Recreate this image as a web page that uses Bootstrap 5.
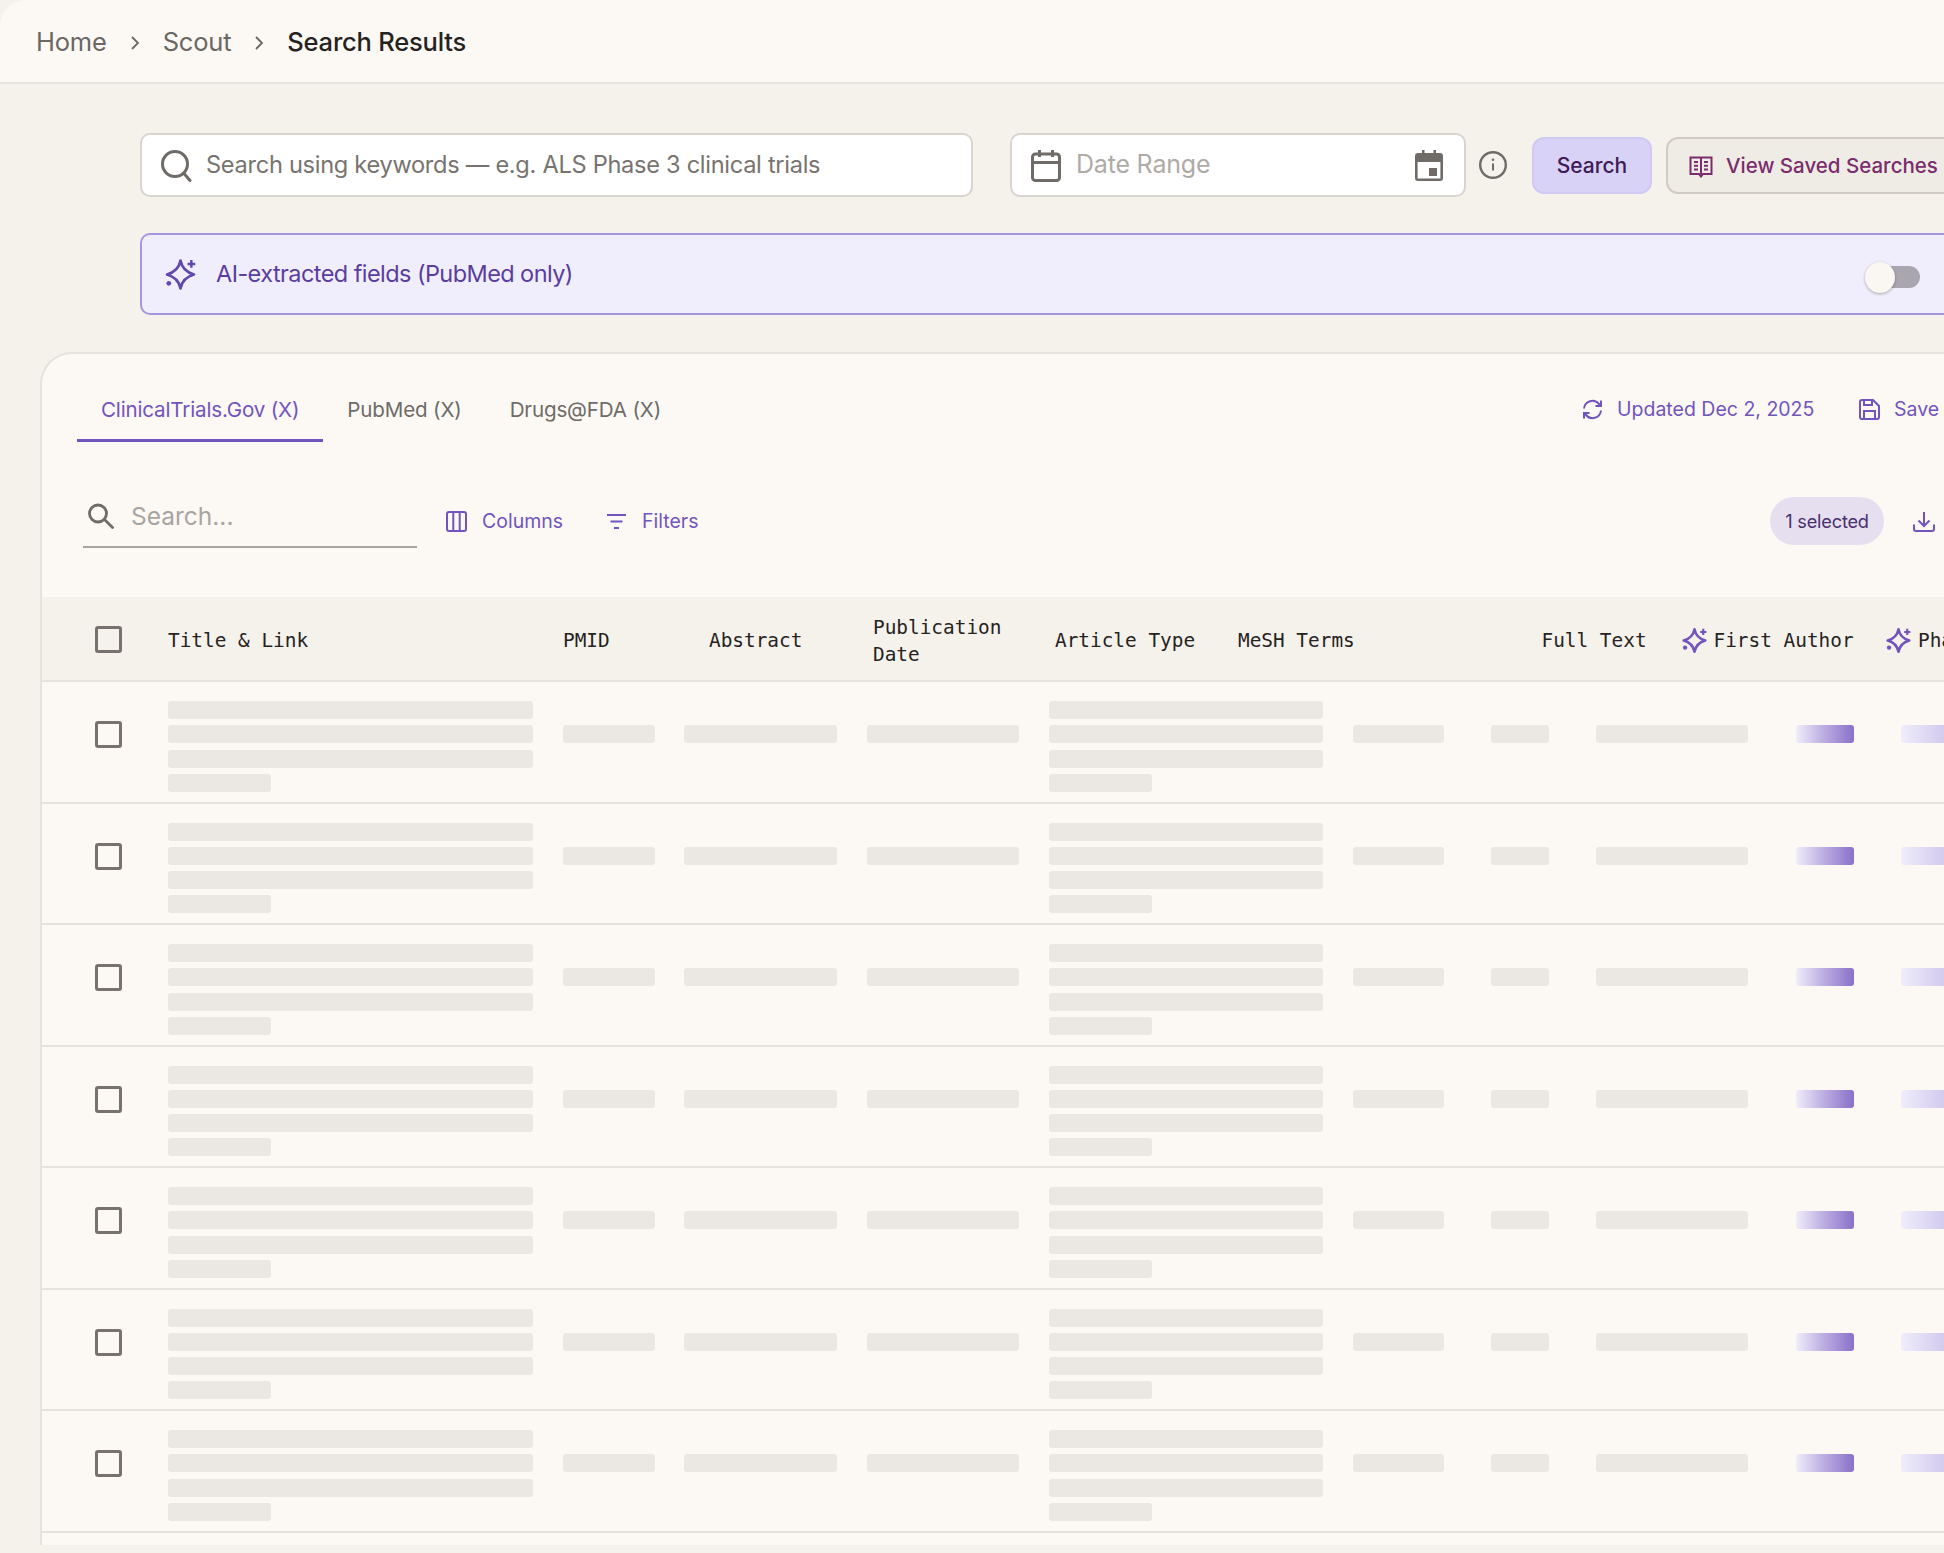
<!doctype html>
<html lang="en">
<head>
<meta charset="utf-8">
<title>Search Results</title>
<link rel="stylesheet" href="https://cdn.jsdelivr.net/npm/bootstrap@5.3.0/dist/css/bootstrap.min.css">
<style>
:root{--pur:#7254bd;--line:#e6e2dc;--paper:#fcf9f5;--sand:#f5f2eb;--bar:#ebe8e3;--ink:#6f6b67}
html,body{height:100%}
body{background:var(--sand);font-family:Inter,"Liberation Sans",sans-serif;overflow:hidden;width:1944px;height:1553px}
svg{display:block;flex:none}
.crumbbar{height:84px;background:var(--paper);border-bottom:2px solid var(--line);border-top-left-radius:26px;padding:3px 0 0 36px;font-size:25.5px;color:#6b6763;letter-spacing:-.2px}
.crumbbar b{font-weight:500;color:#26231f}
.crumbsep{margin:0 23px}
.toolzone{padding:49px 0 0 140px;width:2100px}
.fieldbox{height:64px;background:#fff;border:2px solid #d8d5d0;border-radius:10px;font-size:23.6px;color:#77736f;letter-spacing:-.29px}
.fieldsearch{width:833px;padding-left:18px;gap:14px}
.fielddate{width:456px;margin-left:37px;padding:0 21px 0 19px;gap:15px;color:#aeaba7;font-size:25px;letter-spacing:-.2px}
.infoglyph{margin-left:13px}
.btnsearch{margin-left:25px;width:120px;height:57px;background:#d8d3f6;border:2px solid #d0caf3;border-radius:12px;color:#3f1a56;font-size:21px;font-weight:500;padding:2px 0 0}
.btnsaved{margin-left:14px;width:300px;height:57px;background:#efece5;border:2px solid #d0ccc4;border-radius:12px;color:#7a2c6c;font-size:20.5px;font-weight:500;padding:2px 0 0 21px;gap:13px;justify-content:flex-start}
.aibar{margin-top:36px;height:82px;width:1900px;background:#f0eefc;border:2px solid #a497df;border-radius:10px;padding-left:23px;gap:20px;color:#5a3d9f;font-size:23.5px;letter-spacing:-.57px}
.switchwrap{position:absolute;left:1723px;top:27px;width:55px;height:31px}
.switchtrack{position:absolute;left:15px;top:4px;width:40px;height:22px;border-radius:0 11px 11px 0;background:#a9a6b0}
.switchknob{position:absolute;left:0;top:0;width:30px;height:31px;border-radius:50%;background:#faf7f2;box-shadow:0 1px 3px rgba(0,0,0,.3)}
.panel{margin:37px 0 0 40px;width:2100px;height:1193px;background:var(--paper);border:solid var(--line);border-width:2px 0 0 2px;border-top-left-radius:32px;overflow:hidden}
.tabsrow{height:88px;padding-left:35px;position:relative}
.tabitem{padding:24px 24px 0;height:88px;color:#6f6b67;font-size:20.6px;letter-spacing:-.17px;display:flex;align-items:center}
.tabitem.picked{color:var(--pur);border-bottom:3px solid var(--pur);padding-top:27px}
.rightlink{color:var(--pur);font-size:19.5px;font-weight:400}
.updated{position:absolute;left:1540px;top:45px;gap:14px;line-height:1}
.saved{position:absolute;left:1817px;top:45px;gap:14px;line-height:1}
.filterrow{height:155px;position:relative;color:var(--pur);font-size:19.5px}
.filterbox{position:absolute;left:41px;top:56px;width:334px;height:50px;border-bottom:2px solid #a9a6a2;padding:0 0 12px 4px;gap:16px;color:#a8a5a1;font-size:24.5px;font-weight:400}
.filterlink{position:absolute;top:69px;gap:15px;line-height:1}
.pillsel{position:absolute;left:1728px;top:55px;width:114px;height:48px;border-radius:24px;background:#e6dfef;color:#48306f;font-size:18.2px;letter-spacing:-.2px;padding-top:2px}
.dlglyph{position:absolute;left:1871px;top:69px}
.headrow{height:85px;background:var(--sand);border-bottom:2px solid var(--line);position:relative;font-family:"DejaVu Sans Mono","Liberation Mono",monospace;font-size:19.4px;line-height:27px;color:#26231f}
.headcell{position:absolute;top:3px;height:81px;display:flex;align-items:center;gap:7px;white-space:nowrap}
.headcell .checkmark{margin-top:-2px}
.datarow{height:121.5px;border-bottom:2px solid var(--line);display:flex;align-items:flex-start;padding-top:19px}
.checkmark{width:27px;height:27px;border:3px solid #77726f;border-radius:3px;flex:none}
.checkcell{width:126px;padding-left:53px;flex:none;margin-top:20px}
.skelcol{flex:none;display:flex;flex-direction:column;gap:6.3px}
.skelsingle{margin-top:24.3px}
.skel{height:18px;border-radius:3px;background:var(--bar)}
.skelshort{width:103px}
.skelglow{background:linear-gradient(90deg,#f0edfb 0%,#b9abe0 50%,#8a70c9 100%)}
.skelfade{background:linear-gradient(90deg,#f0edfb 0%,#d2cbee 48%,#b5a7e0 100%)}
</style>
</head>
<body>
<nav class="crumbbar d-flex align-items-center">
  <span>Home</span>
  <svg class="crumbsep" width="10" height="16" viewBox="0 0 10 16" fill="none" stroke="#6b6763" stroke-width="1.8"><path d="M2 2l6 6-6 6"/></svg>
  <span>Scout</span>
  <svg class="crumbsep" width="10" height="16" viewBox="0 0 10 16" fill="none" stroke="#6b6763" stroke-width="1.8"><path d="M2 2l6 6-6 6"/></svg>
  <b>Search Results</b>
</nav>

<div class="toolzone">
  <div class="d-flex align-items-center">
    <div class="fieldbox fieldsearch d-flex align-items-center">
      <svg width="32" height="33" viewBox="0 0 32 33" fill="none" stroke="#6f6b67" stroke-width="3" stroke-linecap="round"><circle cx="15" cy="15" r="12.5"/><path d="M24 24.5l6 7"/></svg>
      <span>Search using keywords — e.g. ALS Phase 3 clinical trials</span>
    </div>
    <div class="fieldbox fielddate d-flex align-items-center">
      <svg width="30" height="33" viewBox="0 0 30 33" fill="none" stroke="#6f6b67" stroke-width="3"><rect x="1.5" y="5" width="27" height="26.500" rx="3"/><path d="M1.500 13.500h27M8.500 1v7M21.500 1v7"/></svg>
      <span class="flex-grow-1">Date Range</span>
      <svg width="28" height="31" viewBox="0 0 28 31" fill="#6f6b67"><path d="M7 0h2.500v3h9V0H21v3h4a3 3 0 0 1 3 3v22a3 3 0 0 1-3 3H3a3 3 0 0 1-3-3V6a3 3 0 0 1 3-3h4zM2.600 12v16.400h22.800V12z"/><rect x="14" y="18" width="8" height="8"/></svg>
    </div>
    <svg class="infoglyph" width="28" height="28" viewBox="0 0 28 28" fill="none" stroke="#6f6b67" stroke-width="2.400"><circle cx="14" cy="14" r="12.800"/><path d="M14 12.500v7" stroke-width="2"/><circle cx="14" cy="8.800" r="1.300" fill="#6f6b67" stroke="none"/></svg>
    <button class="btn btnsearch" type="button">Search</button>
    <button class="btn btnsaved d-flex align-items-center" type="button">
      <svg width="24" height="24" viewBox="0 0 24 24" fill="none" stroke="#7a2c6c" stroke-width="2"><path d="M12 3.500H1.500V20H10l2 2.500 2-2.500h8.500V3.500H12zM12 3.500v17M5 8h4M5 11.800h4M5 15.500h4M15 8h4M15 11.800h4M15 15.500h4"/></svg>
      <span>View Saved Searches</span>
    </button>
  </div>
  <div class="aibar d-flex align-items-center position-relative">
    <svg width="31" height="31" viewBox="0 0 30 30" fill="none" stroke="#6247ad" stroke-width="2.600" stroke-linejoin="round"><path d="M15 1.500Q17 12 28 15 17 18 15 28.500 13 18 2 15 13 12 15 1.500z"/><path d="M25.500 1v7.500M21.800 4.800h7.500" stroke-width="2.400"/><circle cx="3.700" cy="23.500" r="2.300" fill="#6247ad" stroke="none"/></svg>
    <span>AI-extracted fields (PubMed only)</span>
    <div class="switchwrap"><div class="switchtrack"></div><div class="switchknob"></div></div>
  </div>
</div>

<main class="panel">
  <div class="tabsrow d-flex">
    <div class="tabitem picked">ClinicalTrials.Gov (X)</div>
    <div class="tabitem">PubMed (X)</div>
    <div class="tabitem">Drugs@FDA (X)</div>
    <div class="updated rightlink d-flex align-items-center">
      <svg width="21" height="21" viewBox="0 0 21 21" fill="none" stroke="#7254bd" stroke-width="2"><path d="M2 9.500A8.500 8.500 0 0 1 17 5l2 2M19 11.500A8.500 8.500 0 0 1 4 16l-2-2"/><path d="M19 1.500V7h-5.500M2 19.500V14h5.500"/></svg>
      <span>Updated Dec 2, 2025</span>
    </div>
    <div class="saved rightlink d-flex align-items-center">
      <svg width="21" height="21" viewBox="0 0 21 21" fill="none" stroke="#7254bd" stroke-width="2"><path d="M1 3a2 2 0 0 1 2-2h11l6 6v11a2 2 0 0 1-2 2H3a2 2 0 0 1-2-2z"/><path d="M5 20v-8h11v8M5 1v5h8V1"/></svg>
      <span>Save</span>
    </div>
  </div>
  <div class="filterrow">
    <div class="filterbox d-flex align-items-center">
      <svg width="28" height="26" viewBox="0 0 28 26" fill="none" stroke="#6f6b67" stroke-width="2.800" stroke-linecap="round"><circle cx="11" cy="10.500" r="8.500"/><path d="M17.500 16.500l8 8"/></svg>
      <span>Search...</span>
    </div>
    <div class="filterlink d-flex align-items-center" style="left:404px">
      <svg width="21" height="21" viewBox="0 0 21 21" fill="none" stroke="#7254bd" stroke-width="2"><rect x="1" y="1" width="19" height="19" rx="2"/><path d="M7.300 1v19M13.700 1v19"/></svg>
      <span>Columns</span>
    </div>
    <div class="filterlink d-flex align-items-center" style="left:564px">
      <svg width="21" height="21" viewBox="0 0 21 21" fill="none" stroke="#7254bd" stroke-width="2.200"><path d="M1 4h19M4.500 10.500h12M8 17h5"/></svg>
      <span>Filters</span>
    </div>
    <div class="pillsel d-flex align-items-center justify-content-center">1 selected</div>
    <svg class="dlglyph" width="22" height="21" viewBox="0 0 22 21" fill="none" stroke="#7254bd" stroke-width="2"><path d="M1 13.500v4.500a2 2 0 0 0 2 2h16a2 2 0 0 0 2-2v-4.500M11 1v13.500M5.500 9.500l5.500 5.500 5.500-5.500"/></svg>
  </div>

  <div class="headrow" id="head"></div>
  <div id="rows"></div>
</main>

<script>
const spark='<svg width="25" height="25" viewBox="0 0 30 30" fill="none" stroke="#7254bd" stroke-width="3" stroke-linejoin="round"><path d="M15 1.500Q17 12 28 15 17 18 15 28.500 13 18 2 15 13 12 15 1.500z"/><path d="M25.500 1v7.500M21.800 4.800h7.500" stroke-width="2.600"/><circle cx="3.700" cy="23.500" r="2.600" fill="#7254bd" stroke="none"/></svg>';
const PANEL=42;
const heads=[[95,'<span class="checkmark"></span>'],[168,'Title &amp; Link'],[563,'PMID'],[709,'Abstract'],[873,'Publication<br>Date'],[1055,'Article Type'],[1238,'MeSH Terms'],[1541.5,'Full Text'],[1681.5,spark+'First Author'],[1886,spark+'Phase']];
document.getElementById('head').innerHTML=heads.map(h=>`<div class="headcell" style="left:${h[0]-PANEL}px">${h[1]}</div>`).join('');
const cols=[[168,533,1],[563,655],[684,837],[867,1019],[1049,1323,1],[1353,1444],[1491,1549],[1596,1748],[1796,1854,0,'skelglow'],[1901,1990,0,'skelfade']];
const cell=c=>c[2]
  ?'<div class="skel"></div><div class="skel"></div><div class="skel"></div><div class="skel skelshort"></div>'
  :`<div class="skel ${c[3]||''}"></div>`;
let row='<div class="datarow"><div class="checkcell"><div class="checkmark"></div></div>';
let x=168;
cols.forEach(c=>{
  row+=`<div class="skelcol ${c[2]?'':'skelsingle'}" style="margin-left:${c[0]-x}px;width:${c[1]-c[0]}px">${cell(c)}</div>`;
  x=c[1];
});
row+='</div>';
document.getElementById('rows').innerHTML=row.repeat(7);
</script>
</body>
</html>
